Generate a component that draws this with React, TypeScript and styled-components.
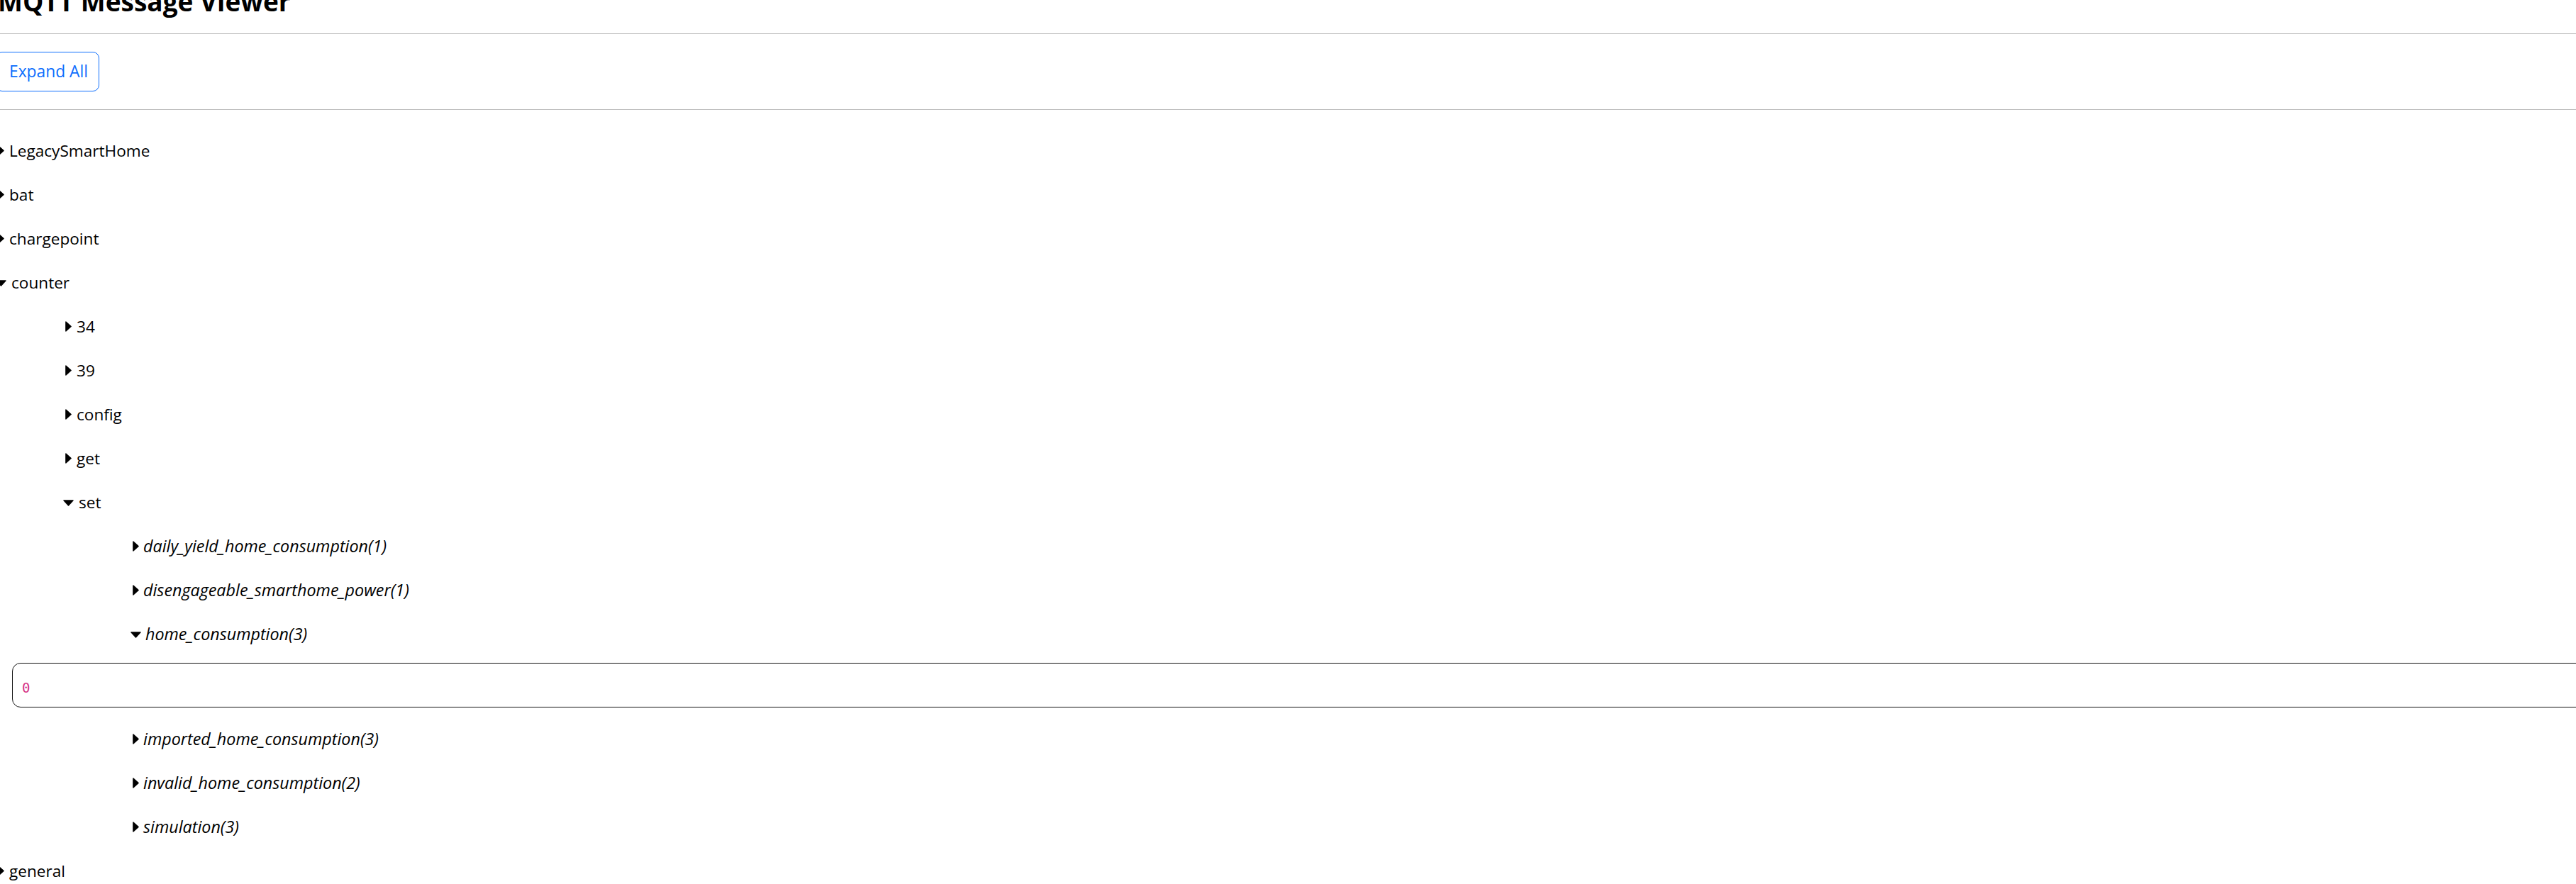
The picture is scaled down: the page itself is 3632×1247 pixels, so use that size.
import React from "react";
import styled, { createGlobalStyle } from "styled-components";

const GlobalStyle = createGlobalStyle`
  html, body {
    margin: 0;
    padding: 0;
    background: #ffffff;
    overflow: hidden;
  }
  body {
    font-family: "Open Sans", "Noto Sans", sans-serif;
    color: #000000;
  }
`;

const Page = styled.div`
  margin-left: -6px;
  width: calc(100vw + 160px);
`;

const Title = styled.h1`
  margin: -22px 0 22px 3px;
  font-size: 37px;
  line-height: 47px;
  font-weight: 700;
  white-space: nowrap;
`;

const Divider = styled.div`
  height: 1px;
  background: #bfbfbf;
`;

const Toolbar = styled.div`
  display: flex;
  align-items: center;
  padding: 25px 0;
`;

const Button = styled.button`
  box-sizing: border-box;
  width: 146px;
  height: 56px;
  padding: 0 0 2px 3px;
  border: 1px solid #0d6efd;
  border-radius: 9px;
  background: #ffffff;
  color: #0d6efd;
  font-family: "Open Sans", "Noto Sans", sans-serif;
  font-size: 22.8px;
  cursor: pointer;
`;

const Tree = styled.div`
  display: flex;
  flex-direction: column;
  padding-top: 26px;
`;

const Row = styled.div<{ $level: number }>`
  display: flex;
  align-items: center;
  height: 62px;
  padding-left: ${(p) => p.$level * 95}px;
  font-size: 22.6px;
  white-space: nowrap;
`;

const CaretBox = styled.span<{ $open: boolean }>`
  display: inline-flex;
  align-items: center;
  margin-left: ${(p) => (p.$open ? 0 : 3)}px;
  margin-top: ${(p) => (p.$open ? 3 : 0)}px;
`;

const Label = styled.span<{ $leaf: boolean }>`
  margin-left: ${(p) => (p.$leaf ? 6 : 7)}px;
  font-style: ${(p) => (p.$leaf ? "italic" : "normal")};
  font-size: ${(p) => (p.$leaf ? "23.3px" : "22.6px")};
`;

const MessageBox = styled.div`
  box-sizing: border-box;
  display: flex;
  align-items: center;
  height: 63px;
  margin: 10px 0 13px 23px;
  padding: 7px 0 0 13px;
  border: 1px solid #111111;
  border-radius: 12px;
`;

const Code = styled.code`
  font-family: "DejaVu Sans Mono", "Liberation Mono", monospace;
  font-size: 19px;
  color: #d63384;
`;

type Node = {
  name: string;
  count?: number;
  open?: boolean;
  message?: string;
  children?: Node[];
};

const data: Node[] = [
  { name: "LegacySmartHome" },
  { name: "bat" },
  { name: "chargepoint" },
  {
    name: "counter",
    open: true,
    children: [
      { name: "34" },
      { name: "39" },
      { name: "config" },
      { name: "get" },
      {
        name: "set",
        open: true,
        children: [
          { name: "daily_yield_home_consumption", count: 1 },
          { name: "disengageable_smarthome_power", count: 1 },
          { name: "home_consumption", count: 3, open: true, message: "0" },
          { name: "imported_home_consumption", count: 3 },
          { name: "invalid_home_consumption", count: 2 },
          { name: "simulation", count: 3 },
        ],
      },
    ],
  },
  { name: "general" },
];

const Caret: React.FC<{ open: boolean }> = ({ open }) => (
  <CaretBox $open={open}>
    {open ? (
      <svg width="15" height="9" viewBox="0 0 15 9">
        <polygon
          points="0.9,0.9 14.1,0.9 7.5,8.1"
          fill="#000"
          stroke="#000"
          strokeWidth="1.4"
          strokeLinejoin="round"
        />
      </svg>
    ) : (
      <svg width="9" height="15" viewBox="0 0 9 15">
        <polygon
          points="0.9,0.9 8.1,7.5 0.9,14.1"
          fill="#000"
          stroke="#000"
          strokeWidth="1.4"
          strokeLinejoin="round"
        />
      </svg>
    )}
  </CaretBox>
);

const renderNodes = (nodes: Node[], level: number): React.ReactNode[] =>
  nodes.map((n, i) => {
    const leaf = n.count !== undefined;
    return (
      <React.Fragment key={`${level}-${i}-${n.name}`}>
        <Row $level={level}>
          <Caret open={!!n.open} />
          <Label $leaf={leaf}>
            {n.name}
            {leaf ? `(${n.count})` : ""}
          </Label>
        </Row>
        {n.open && n.message !== undefined && (
          <MessageBox>
            <Code>{n.message}</Code>
          </MessageBox>
        )}
        {n.open && n.children && renderNodes(n.children, level + 1)}
      </React.Fragment>
    );
  });

export default function App() {
  return (
    <>
      <GlobalStyle />
      <Page>
        <Title>MQTT Message Viewer</Title>
        <Divider />
        <Toolbar>
          <Button>Expand All</Button>
        </Toolbar>
        <Divider />
        <Tree>{renderNodes(data, 0)}</Tree>
      </Page>
    </>
  );
}
